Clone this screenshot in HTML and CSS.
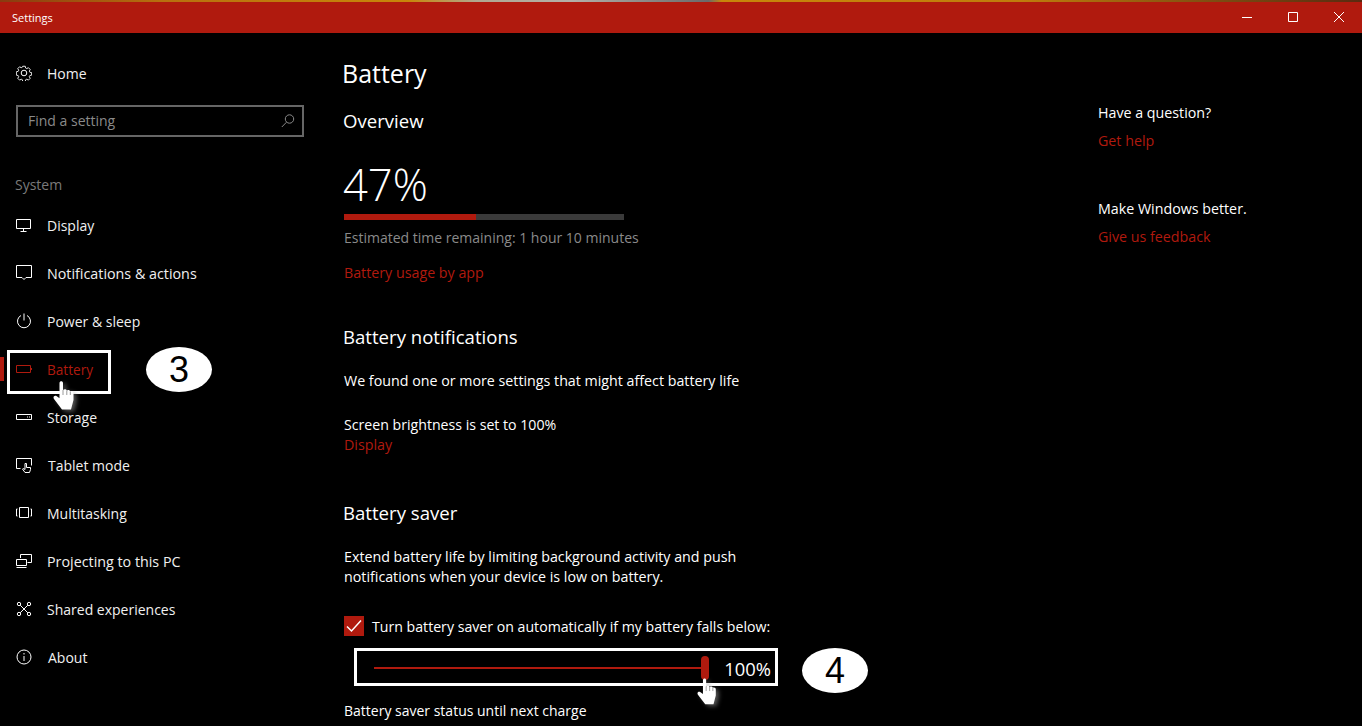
FILE: index.html
```html
<!DOCTYPE html>
<html lang="en">
<head>
  <meta charset="UTF-8">
  <title>Settings</title>
  <link rel="stylesheet" href="styles.css">
</head>
<body>

<div class="window">
  <div class="wallpaper-strip"></div>
  <header class="titlebar">
    <span class="titlebar-name">Settings</span>
    <div class="window-buttons">
      <svg class="win-btn" width="12" height="12" viewBox="0 0 12 12"><path d="M1 6.500h10" stroke="#fff" fill="none"/></svg>
      <svg class="win-btn" width="12" height="12" viewBox="0 0 12 12"><path d="M1.500 1.500h9v9h-9z" stroke="#fff" fill="none"/></svg>
      <svg class="win-btn" width="12" height="12" viewBox="0 0 12 12"><path d="M1 1l10 10M11 1L1 11" stroke="#fff" fill="none"/></svg>
    </div>
  </header>

  <div class="content">
    <nav class="sidebar">
      <a class="nav-item home">
        <svg class="nav-icon" viewBox="0 0 16 16"><path d="M6.600 .5h2.800l.4 2 1.300.6 1.800-1 2 2-1 1.800.6 1.300 2 .4v2.800l-2 .4-.6 1.300 1 1.800-2 2-1.800-1-1.300.6-.4 2H6.600l-.4-2-1.300-.6-1.800 1-2-2 1-1.800-.6-1.300-2-.4V6.600l2-.4.6-1.300-1-1.800 2-2 1.800 1 1.300-.6z" transform="translate(.8 .8) scale(.9)"/><circle cx="8" cy="8" r="2.800"/></svg>
        <span>Home</span>
      </a>
      <div class="search">
        <span>Find a setting</span>
        <svg width="16" height="16" viewBox="0 0 16 16"><circle cx="9.500" cy="6" r="4.200"/><path d="M6.500 9.200L1.800 14"/></svg>
      </div>
      <div class="nav-group">System</div>
      <a class="nav-item">
        <svg class="nav-icon" viewBox="0 0 16 16"><path d="M.5 2.500h14v9H.5zM7.500 11.500v3M4.500 14.500h6"/></svg>
        <span>Display</span>
      </a>
      <a class="nav-item wide">
        <svg class="nav-icon" viewBox="0 0 16 16"><path d="M.5 .5h15v12H10l-2 2-2-2H.5z"/></svg>
        <span>Notifications &amp; actions</span>
      </a>
      <a class="nav-item">
        <svg class="nav-icon" viewBox="0 0 16 16"><path d="M8 .5v7M5 2.500a6.500 6.500 0 1 0 6 0"/></svg>
        <span>Power &amp; sleep</span>
      </a>
      <a class="nav-item active">
        <svg class="nav-icon" viewBox="0 0 16 16"><path d="M.5 4.500h14v7H.5zM15.500 7v2"/></svg>
        <span>Battery</span>
      </a>
      <a class="nav-item">
        <svg class="nav-icon" viewBox="0 0 16 16"><path d="M.5 5.500h15v5H.5zM11 8h1M13 8h1"/></svg>
        <span>Storage</span>
      </a>
      <a class="nav-item nudge">
        <svg class="nav-icon" viewBox="0 0 16 16"><path d="M4.500 11.500H.5v-10h15v7M9 15.500l-2.500-3.500 1-.5 1.500 1V6.500h1.500v4h4v2l-1 3z"/></svg>
        <span>Tablet mode</span>
      </a>
      <a class="nav-item">
        <svg class="nav-icon" viewBox="0 0 16 16"><path d="M3.500 2.500h9v10h-9zM1.500 4H.5v7h1M14.500 4h1v7h-1"/></svg>
        <span>Multitasking</span>
      </a>
      <a class="nav-item wide">
        <svg class="nav-icon" viewBox="0 0 16 16"><path d="M4.500 5V1.500h11v8h-4M.5 6.500h10v6H.5zM.5 14.500h10"/></svg>
        <span>Projecting to this PC</span>
      </a>
      <a class="nav-item">
        <svg class="nav-icon" viewBox="0 0 16 16"><circle cx="3" cy="3" r="1.700"/><circle cx="13" cy="3" r="1.700"/><circle cx="3" cy="13" r="1.700"/><circle cx="13" cy="13" r="1.700"/><path d="M4.200 4.200l7.600 7.600M11.800 4.200l-7.600 7.600"/></svg>
        <span>Shared experiences</span>
      </a>
      <a class="nav-item nudge">
        <svg class="nav-icon" viewBox="0 0 16 16"><circle cx="8" cy="8" r="7"/><path d="M8 7v5M8 4v1.500"/></svg>
        <span>About</span>
      </a>
    </nav>

    <main class="main">
      <h1>Battery</h1>
      <h2 class="overview">Overview</h2>
      <div class="percent">47%</div>
      <div class="meter"><div class="meter-fill" style="width: 47%"></div></div>
      <p class="muted">Estimated time remaining: 1 hour 10 minutes</p>
      <a class="link usage">Battery usage by app</a>

      <h2 class="notif-head">Battery notifications</h2>
      <p class="found">We found one or more settings that might affect battery life</p>
      <p class="brightness">Screen brightness is set to 100%</p>
      <a class="link">Display</a>

      <h2 class="saver-head">Battery saver</h2>
      <p class="extend">Extend battery life by limiting background activity and push<br>notifications when your device is low on battery.</p>
      <label class="check-row">
        <span class="checkbox"><svg width="20" height="20" viewBox="0 0 20 20"><path d="M3 10.500l4.500 4.500L17 4.500" stroke="#fff" stroke-width="1.500" fill="none"/></svg></span>
        Turn battery saver on automatically if my battery falls below:
      </label>
      <div class="slider-row">
        <div class="slider-track"><div class="slider-thumb"></div></div>
        <span class="slider-value">100%</span>
      </div>
      <p class="status">Battery saver status until next charge</p>
    </main>

    <aside class="help">
      <p>Have a question?</p>
      <a class="link">Get help</a>
      <p class="better">Make Windows better.</p>
      <a class="link">Give us feedback</a>
    </aside>
  </div>
</div>

<!-- tutorial annotations drawn on top of the screenshot -->
<div class="mark-box box-battery"></div>
<div class="bubble bubble-3">3</div>
<div class="mark-box box-slider"></div>
<div class="bubble bubble-4">4</div>
<svg class="hand hand-battery" width="24" height="29" viewBox="0 0 24 29"><path d="M6.500 2c0-2.300 3.500-2.300 3.500 0v7c1.500-1.200 3.300-.8 3.800.6 1.400-1 3-.5 3.500.9 1.500-.8 3.200 0 3.200 1.800V19l-2.500 9.500H9L1 18c-1.500-2.500.8-4.200 2.800-2.800l2.700 2z" fill="#fff"/><path d="M10 9v5M13.800 9.600V14M17.300 10.500V14" stroke="#999" fill="none"/></svg>
<svg class="hand hand-slider" width="22" height="27" viewBox="0 0 24 29"><path d="M6.500 2c0-2.300 3.500-2.300 3.500 0v7c1.500-1.200 3.300-.8 3.800.6 1.400-1 3-.5 3.500.9 1.500-.8 3.200 0 3.200 1.800V19l-2.500 9.500H9L1 18c-1.500-2.500.8-4.200 2.800-2.800l2.700 2z" fill="#fff"/><path d="M10 9v5M13.800 9.600V14M17.300 10.500V14" stroke="#999" fill="none"/></svg>

</body>
</html>
```

FILE: styles.css
```css
/* Global */
* {
  box-sizing: border-box;
}

html, body {
  height: 100%;
}

body {
  margin: 0;
  background-color: #000;
  color: #fff;
  font-family: "Open Sans", "Noto Sans", sans-serif;
  font-size: 14.25px;
  overflow: hidden;
}

h1, h2, p {
  margin: 0;
  font-weight: 400;
}

.window {
  display: flex;
  flex-direction: column;
  height: 726px;
  overflow: hidden;
}

/* Title bar */
.wallpaper-strip {
  height: 2px;
  flex: none;
  background: linear-gradient(90deg, #8a3a10 0%, #b8700f 12%, #c8860a 30%, #b0a890 35%, #b4b0a8 42%, #6a6a6a 52%, #c8860a 53%, #c07c0c 75%, #7a4a12 90%, #5a2a10 100%);
}

.titlebar {
  height: 31px;
  flex: none;
  display: flex;
  align-items: center;
  justify-content: space-between;
  padding: 0 0 1px 12px;
  background-color: #b01a0e;
}

.titlebar-name {
  font-size: 11px;
}

.window-buttons {
  display: flex;
  gap: 34px;
  padding-right: 17px;
}

/* Sidebar */
.content {
  flex: 1;
  display: flex;
  min-height: 0;
}

.sidebar {
  width: 343px;
  flex: none;
  padding: 16px 39px 0 0;
  font-size: 14px;
}

.nav-item {
  display: flex;
  align-items: center;
  gap: 15px;
  height: 48px;
  padding-left: 16px;
  color: #f0f0f0;
}

.nav-item.wide {
  font-size: 14.3px;
}

.nudge span {
  margin-left: 1px;
}

.nav-icon {
  width: 16px;
  height: 16px;
  flex: none;
  fill: none;
  stroke: #fff;
  stroke-width: 1;
}

.nav-item.active {
  color: #b01a0e;
  font-size: 13.6px;
  position: relative;
}

.nav-item.active .nav-icon {
  stroke: #b01a0e;
}

.nav-item.active::before {
  content: "";
  position: absolute;
  left: 0;
  top: 12px;
  width: 4px;
  height: 24px;
  background-color: #b01a0e;
}

.search {
  display: flex;
  align-items: center;
  justify-content: space-between;
  height: 32px;
  margin: 8px 0 0 16px;
  padding: 0 6px 2px 10px;
  border: 2px solid #666;
  color: #8a8a8a;
}

.search svg {
  fill: none;
  stroke: #8a8a8a;
  margin-top: 2px;
}

.nav-group {
  margin: 38px 0 0 15px;
  height: 26px;
  color: #7a7a7a;
}

/* Main column */
.main {
  width: 720px;
  flex: none;
}

h1 {
  font-size: 25px;
  line-height: 32px;
  margin-top: 24px;
  margin-left: -1px;
}

h2 {
  font-size: 18.6px;
  line-height: 24px;
}

.overview {
  margin-top: 20px;
}

.percent {
  font-size: 43.5px;
  font-weight: 300;
  line-height: 56px;
  margin-top: 24px;
}

.meter {
  width: 280px;
  height: 6px;
  margin-top: 1px;
  margin-left: 1px;
  background-color: #3a3a3a;
}

.meter-fill {
  height: 100%;
  background-color: #b01a0e;
}

.muted {
  color: #8a8a8a;
  margin: 7px 0 0 1px;
  line-height: 22px;
  font-size: 14px;
}

.link {
  display: block;
  color: #b01a0e;
  line-height: 20px;
  margin-left: 1px;
}

.usage {
  margin-top: 14px;
}

.notif-head {
  margin-top: 42px;
}

.found {
  margin: 22px 0 0 1px;
  line-height: 20px;
}

.brightness {
  margin: 24px 0 0 1px;
  line-height: 20px;
  font-size: 14.15px;
}

.saver-head {
  margin-top: 46px;
}

.extend {
  margin: 22px 0 0 1px;
  line-height: 20px;
}

.check-row {
  display: flex;
  align-items: center;
  gap: 8px;
  margin: 29px 0 0 1px;
  height: 20px;
  font-size: 14.15px;
}

.checkbox {
  width: 20px;
  height: 20px;
  background-color: #b01a0e;
}

.checkbox svg {
  display: block;
}

.slider-row {
  display: flex;
  align-items: center;
  gap: 15px;
  width: 434px;
  height: 38px;
  margin-top: 13px;
  padding: 0 6px 0 31px;
}

.slider-track {
  flex: 1;
  height: 2px;
  position: relative;
  background-color: #b01a0e;
}

.slider-thumb {
  position: absolute;
  right: 0;
  top: -11px;
  width: 8px;
  height: 24px;
  border-radius: 4px;
  background-color: #b01a0e;
}

.slider-value {
  font-size: 18.4px;
}

.status {
  margin: 14px 0 0 1px;
  font-size: 14px;
}

/* Help column */
.help {
  flex: 1;
  padding: 70px 0 0 35px;
}

.help .link {
  margin: 9px 0 0;
}

.better {
  margin-top: 48px;
}

/* Annotations */
.mark-box {
  position: absolute;
  border: 3px solid #fff;
}

.box-battery {
  left: 7px;
  top: 350px;
  width: 104px;
  height: 44px;
}

.box-slider {
  left: 354px;
  top: 648px;
  width: 424px;
  height: 38px;
}

.bubble {
  position: absolute;
  width: 66px;
  height: 45px;
  border-radius: 50%;
  background-color: #fff;
  color: #000;
  font-family: "Liberation Sans", sans-serif;
  font-size: 36px;
  line-height: 45px;
  text-align: center;
}

.bubble-3 {
  left: 146px;
  top: 347px;
}

.bubble-4 {
  left: 802px;
  top: 648px;
}

.hand {
  position: absolute;
  filter: drop-shadow(3px 2px 2px rgba(150, 150, 150, 0.55));
}

.hand-battery {
  left: 53px;
  top: 381px;
}

.hand-slider {
  left: 697px;
  top: 678px;
}
```
